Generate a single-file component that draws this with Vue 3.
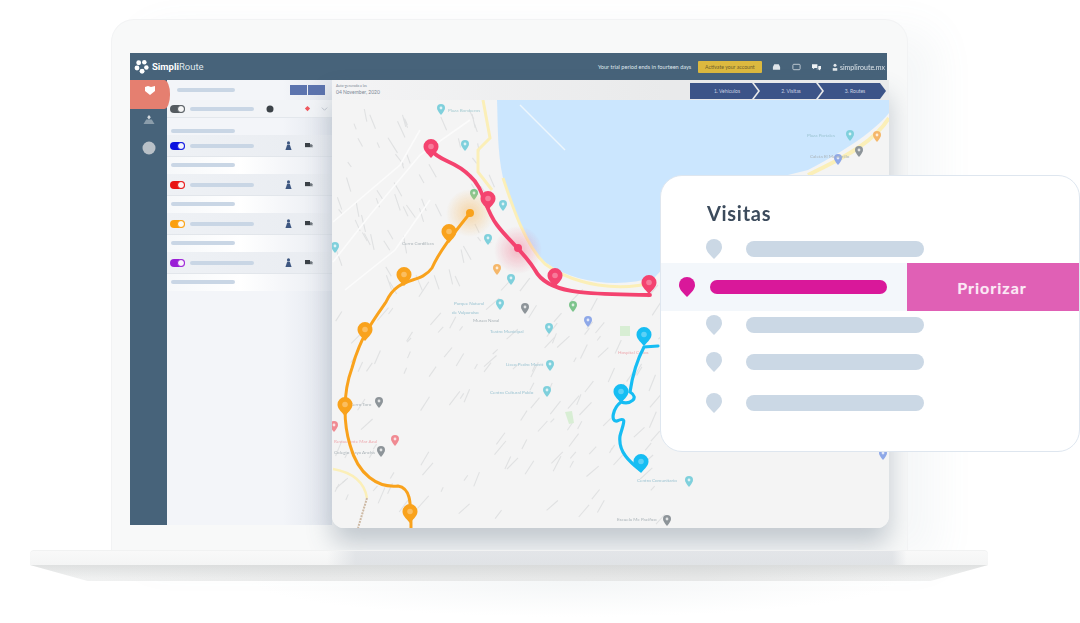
<template>
  <div class="stage">
    <div class="laptop">
      <div class="lid">
        <div class="screen">
          <header class="topbar">
            <div class="brand">
              <svg class="logo" viewBox="0 0 16 16">
                <g fill="#fff">
                  <circle cx="5" cy="4" r="2.6" />
                  <circle cx="11" cy="3.5" r="2.4" />
                  <circle cx="3.2" cy="9.6" r="2.6" />
                  <circle cx="8.6" cy="13" r="2.6" />
                  <circle cx="13.2" cy="9" r="2.4" />
                </g>
                <circle cx="8" cy="8" r="2" fill="#47637a" />
              </svg>
              <span class="brand-name"><b>Simpli</b>Route</span>
            </div>
            <span class="trial">Your trial period ends in fourteen days</span>
            <span class="upgrade">Activate your account</span>
            <svg class="bar-icon" viewBox="0 0 10 8"><path d="M1 7V4l1.5-3h5L9 4v3z" fill="#dfe5ea" /></svg>
            <svg class="bar-icon" viewBox="0 0 10 8"><rect x="1" y="1" width="8" height="6" rx="1" fill="none" stroke="#c8d2da" /></svg>
            <svg class="bar-icon" viewBox="0 0 10 8"><path d="M0 1h6v4H3L1 6.500V5H0zM7 3h3v3.500H9V8L7 6.500H5V6h2z" fill="#eef2f5" /></svg>
            <span class="account">
              <svg class="user-icon" viewBox="0 0 8 10"><circle cx="4" cy="2.500" r="2" fill="#e3e8ec" /><path d="M1 10V6.500h6V10z" fill="#e3e8ec" /></svg>
              simpliroute.mx
            </span>
          </header>

          <nav class="sidenav">
            <div class="nav-item active">
              <svg viewBox="0 0 12 10" class="nav-icon"><path d="M1 1.500 4 .5l3 1 4-1v5L6 9.500 1 5.500z" fill="#fff" /></svg>
            </div>
            <div class="nav-item">
              <svg viewBox="0 0 12 12" class="nav-icon"><path d="M6 1 8 3.500 6 6 4 3.500z" fill="#d4dadf" /><path d="M0 11 3 6h6l3 5z" fill="#8b9dab" /></svg>
            </div>
            <div class="nav-item">
              <svg viewBox="0 0 14 14" class="nav-icon gear"><circle cx="7" cy="7" r="6.500" fill="#b9c1c8" /></svg>
            </div>
          </nav>

          <aside class="panel">
            <div class="panel-head">
              <span class="bar w58"></span>
              <div class="head-btns"><span></span><span></span></div>
            </div>
            <div class="fleet">
              <span class="toggle" style="--c: #555b60"></span>
              <span class="bar w64"></span>
              <svg class="fleet-icon" viewBox="0 0 8 8"><circle cx="4" cy="4" r="3.500" fill="#3c4248" /></svg>
              <svg class="flag" viewBox="0 0 8 8"><path d="M1 4l3-3 3 3-3 3z" fill="#f0595f" /></svg>
              <svg class="chev" viewBox="0 0 8 8"><path d="M1 3l3 3 3-3" fill="none" stroke="#bcc4cc" /></svg>
            </div>
            <div class="group-label"><span class="bar w64"></span></div>
            <template v-for="d in drivers" :key="d">
              <div class="driver">
                <span class="toggle" :style="{ '--c': d }"></span>
                <span class="bar w64"></span>
                <svg class="person" viewBox="0 0 8 10"><circle cx="4" cy="2" r="1.800" fill="#3d5680" /><path d="M.5 10 2.500 4h3l2 6z" fill="#3d5680" /></svg>
                <svg class="truck" viewBox="0 0 12 8"><path d="M0 1h6v5H0z" fill="#3c4248" /><path d="M6 2.500h2l1.500 1.500v2H6z" fill="#70777e" /><circle cx="9" cy="5" r=".8" fill="#b4bac0" /></svg>
              </div>
              <div class="driver-sub"><span class="bar w64"></span></div>
            </template>
          </aside>

          <main class="workspace">
            <div class="map-head">
              <div class="map-date">
                <small>Auto-generado a las</small>
                <span>04 November, 2020</span>
              </div>
              <div class="steps">
                <span v-for="s in steps" :key="s" class="step">{{ s }}</span>
              </div>
            </div>
            <svg class="map" viewBox="332 100 557 428" preserveAspectRatio="none">
              <defs>
                <radialGradient id="glowOrange"><stop offset="0" stop-color="#f6c57e" stop-opacity=".65" /><stop offset="1" stop-color="#f6c57e" stop-opacity="0" /></radialGradient>
                <radialGradient id="glowPink"><stop offset="0" stop-color="#f2708a" stop-opacity=".45" /><stop offset="1" stop-color="#f2708a" stop-opacity="0" /></radialGradient>
                <filter id="soft"><feGaussianBlur stdDeviation=".5" /></filter>
              </defs>
              <rect x="332" y="100" width="557" height="428" fill="#f4f4f4" />
              <path d="M497 100 L889 100 L889 113 C875 130 850 148 808 170 L760 182 L690 240 L655 277 C620 288 575 284 545 262 C525 245 512 205 503 178 C497 150 498 125 497 100Z" fill="#cbe6fe" />
              <g filter="url(#soft)">
                <path d="M520 105 L565 150" stroke="#eef6fc" stroke-width="1.500" />
                <path v-for="(h, i) in hairlines" :key="i" :d="h" stroke="#e0e1e2" stroke-width="1.100" fill="none" />
                <path d="M333 222 L400 165 L420 130 M333 262 L370 215 L420 155 L470 120 M345 290 L395 250 L430 200" stroke="#fbfbfb" stroke-width="1.600" fill="none" />
                <path d="M483 100 L490 138 L478 150 L478 172 L492 190 M503 178 C512 205 525 245 545 264 C575 286 620 292 655 282" stroke="#fbefb8" stroke-width="3" fill="none" />
                <path d="M889 118 C875 140 850 155 808 175" stroke="#fbefb8" stroke-width="4" fill="none" />
                <path d="M333 469 C350 472 364 480 367 498" stroke="#fbefb8" stroke-width="2.500" fill="none" />
                <path d="M367 498 L358 528" stroke="#cdb9a4" stroke-width="2" stroke-dasharray="2 1" fill="none" />
                <rect x="620" y="326" width="10" height="10" fill="#d8eed4" />
                <path d="M565 412 L572 411 L574 423 L569 424Z" fill="#d8eed4" />
                <g v-for="p in pois" :key="p.x + '-' + p.y" :transform="`translate(${p.x} ${p.y})`">
                  <path d="M0 5C-2.500 2-4-.2-4-2a4 4 0 0 1 8 0C4-.2 2.500 2 0 5Z" :fill="p.c" />
                  <circle cy="-2" r="1.400" fill="#fff" fill-opacity=".75" />
                </g>
                <text v-for="l in labels" :key="l.t" :x="l.x" :y="l.y" :fill="l.c" class="map-label">{{ l.t }}</text>
              </g>
              <circle cx="470" cy="213" r="24" fill="url(#glowOrange)" />
              <circle cx="518" cy="250" r="24" fill="url(#glowPink)" />
              <path d="M431 150 C440 162 455 160 470 176 C484 188 484 208 497 225 C508 240 524 252 535 270 C548 295 590 294 650 295" stroke="#f4436f" stroke-width="3.800" fill="none" stroke-linecap="round" />
              <path d="M470 213 C455 232 440 250 432 268 C420 285 398 275 386 302 C372 322 360 338 352 368 C342 395 344 425 350 445 C358 475 378 488 398 486 C410 488 411 500 411 528" stroke="#f9a21c" stroke-width="3" fill="none" stroke-linecap="round" />
              <path d="M658 346 L644 347 C636 362 632 378 630 392 C640 398 630 405 621 402 C613 408 610 422 617 421 C628 416 623 424 620 436 C618 452 630 462 640 470" stroke="#16bdf3" stroke-width="3.200" fill="none" stroke-linecap="round" />
              <g v-for="m in markers" :key="m.x + '-' + m.y" :transform="`translate(${m.x} ${m.y})`">
                <path d="M0 9C-4.500 4-7.500 1.200-7.500-2.500a7.500 7.500 0 0 1 15 0C7.500 1.200 4.500 4 0 9Z" :fill="m.c" />
                <circle cy="-2.500" r="2.800" fill="#fff" fill-opacity=".3" />
              </g>
              <circle cx="470" cy="213" r="4" fill="#f9a21c" />
              <circle cx="518" cy="248" r="4" fill="#f4436f" />
            </svg>
          </main>
        </div>
      </div>
      <div class="base">
        <div class="base-top"></div>
        <div class="base-bottom"></div>
      </div>
    </div>

    <section class="visits">
      <h2>Visitas</h2>
      <ul>
        <li v-for="v in 5" :key="v" class="visit" :class="{ priority: v === 2 }">
          <svg class="visit-pin" viewBox="0 0 16 20"><path d="M8 20C3 15 0 12 0 8a8 8 0 0 1 16 0c0 4-3 7-8 12Z" /></svg>
          <span class="visit-bar"></span>
          <span v-if="v === 2" class="prioritize">Priorizar</span>
        </li>
      </ul>
    </section>
  </div>
</template>

<script setup>
const drivers = ["#0b12e0", "#e81414", "#fb9f0d", "#9a1fd6"];
const steps = ["1. Vehículos", "2. Visitas", "3. Routes"];

const markers = [
  { x: 431, y: 149, c: "#f4436f" },
  { x: 488, y: 201, c: "#f4436f" },
  { x: 555, y: 278, c: "#f4436f" },
  { x: 649, y: 285, c: "#f4436f" },
  { x: 449, y: 234, c: "#f9a21c" },
  { x: 404, y: 277, c: "#f9a21c" },
  { x: 365, y: 332, c: "#f9a21c" },
  { x: 345, y: 407, c: "#f9a21c" },
  { x: 410, y: 514, c: "#f9a21c" },
  { x: 644, y: 337, c: "#16bdf3" },
  { x: 621, y: 394, c: "#16bdf3" },
  { x: 641, y: 464, c: "#16bdf3" },
];

const pois = [
  { x: 441, y: 110, c: "#7fd0dc" },
  { x: 465, y: 146, c: "#7fd0dc" },
  { x: 474, y: 195, c: "#7cc48c" },
  { x: 503, y: 206, c: "#7fd0dc" },
  { x: 488, y: 240, c: "#7fd0dc" },
  { x: 497, y: 270, c: "#f5b76a" },
  { x: 511, y: 280, c: "#7fd0dc" },
  { x: 335, y: 248, c: "#7fd0dc" },
  { x: 500, y: 305, c: "#7fd0dc" },
  { x: 525, y: 309, c: "#8d9499" },
  { x: 573, y: 307, c: "#7cc48c" },
  { x: 588, y: 322, c: "#8ea8e8" },
  { x: 549, y: 329, c: "#7fd0dc" },
  { x: 550, y: 366, c: "#7fd0dc" },
  { x: 547, y: 392, c: "#7fd0dc" },
  { x: 379, y: 403, c: "#8d9499" },
  { x: 395, y: 441, c: "#f08a92" },
  { x: 381, y: 452, c: "#8d9499" },
  { x: 334, y: 427, c: "#f08a92" },
  { x: 689, y: 482, c: "#7fd0dc" },
  { x: 667, y: 521, c: "#8d9499" },
  { x: 883, y: 455, c: "#8ea8e8" },
  { x: 850, y: 136, c: "#7fd0dc" },
  { x: 877, y: 137, c: "#f5b76a" },
  { x: 859, y: 152, c: "#8d9499" },
  { x: 838, y: 160, c: "#8ea8e8" },
];

const labels = [
  { x: 448, y: 112, t: "Plaza Bomberos", c: "#a6ccd2" },
  { x: 402, y: 245, t: "Cerro Cordillera", c: "#aab3b8" },
  { x: 454, y: 305, t: "Parque Natural", c: "#9cc4d2" },
  { x: 452, y: 314, t: "de Valparaíso", c: "#9cc4d2" },
  { x: 473, y: 322, t: "Museo Naval", c: "#aab3b8" },
  { x: 490, y: 333, t: "Teatro Municipal", c: "#9cc4d2" },
  { x: 506, y: 366, t: "Liceo Pedro Montt", c: "#9cc4d2" },
  { x: 490, y: 394, t: "Centro Cultural Pablo", c: "#9cc4d2" },
  { x: 334, y: 443, t: "Restaurante Mar Azul", c: "#eeaab0" },
  { x: 334, y: 454, t: "Colegio Playa Ancha", c: "#aab3b8" },
  { x: 350, y: 406, t: "Cerro Toro", c: "#aab3b8" },
  { x: 618, y: 354, t: "Hospital Carlos", c: "#eeaab0" },
  { x: 637, y: 482, t: "Centro Comunitario", c: "#9cc4d2" },
  { x: 617, y: 521, t: "Escuela Mc Pacífico", c: "#aab3b8" },
  { x: 807, y: 137, t: "Plaza Portales", c: "#9cc4d2" },
  { x: 810, y: 158, t: "Caleta El Membrillo", c: "#aab3b8" },
];

// scattered streets, same seed every time so the picture stays stable
let seed = 7;
const rnd = () => {
  seed = (seed * 16807) % 2147483647;
  return seed / 2147483647;
};
const hairlines = [];
while (hairlines.length < 190) {
  const x = 335 + rnd() * 345;
  const y = 105 + rnd() * 420;
  if (x > 490 && y < 290) continue;
  const len = 5 + rnd() * 13;
  const angle = (y < 290 ? 0.9 + rnd() * 0.5 : -1.2 + rnd() * 0.5);
  hairlines.push(`M${x.toFixed(1)} ${y.toFixed(1)} l${(Math.cos(angle) * len).toFixed(1)} ${(Math.sin(angle) * len).toFixed(1)}`);
}
</script>

<style>
html,
body {
  margin: 0;
  background: #fff;
  overflow: hidden;
}
</style>

<style scoped>
.stage {
  position: relative;
  width: 1080px;
  height: 623px;
  overflow: hidden;
  background: #fff;
  font-family: "Lato", "Liberation Sans", sans-serif;
}

.laptop {
  width: 958px;
  margin-left: 30px;
  padding-top: 20px;
  display: flex;
  flex-direction: column;
}

.lid {
  width: 795px;
  height: 530px;
  box-sizing: border-box;
  margin-left: 82px;
  padding: 33px 20px 25px 18px;
  background: #f8f9f9;
  border-radius: 22px 22px 0 0;
  box-shadow: 0 0 0 1px #f2f3f4, 30px 10px 40px rgba(120, 135, 150, 0.07);
  overflow: hidden;
}

.screen {
  height: 100%;
  display: grid;
  grid-template-columns: 37px 165px 1fr;
  grid-template-rows: 27px 1fr;
  filter: blur(0.5px);
}

.topbar {
  grid-column: 1 / -1;
  display: flex;
  align-items: center;
  padding: 0 2px 0 4px;
  background: #47637a;
  color: #dfe6eb;
}

.brand {
  display: flex;
  align-items: center;
  gap: 3px;
  margin-right: auto;
}

.logo {
  width: 15px;
  height: 15px;
}

.brand-name {
  font-size: 9.500px;
  color: #dfe6eb;
  font-family: "Roboto", sans-serif;
}

.brand-name b {
  font-weight: 700;
  color: #fff;
}

.trial {
  font-size: 5.600px;
  width: 100px;
  white-space: nowrap;
}

.upgrade {
  width: 64px;
  height: 12px;
  line-height: 12px;
  text-align: center;
  background: #dcb93f;
  color: #6d5e2c;
  font-size: 5.200px;
  white-space: nowrap;
  border-radius: 1px;
  margin-right: 10px;
}

.bar-icon {
  width: 9px;
  height: 8px;
  margin-right: 11px;
}

.bar-icon:nth-of-type(4) {
  margin-right: 12px;
}

.account {
  display: flex;
  align-items: center;
  gap: 2px;
  font-size: 7px;
  white-space: nowrap;
}

.user-icon {
  width: 6px;
  height: 8px;
}

.sidenav {
  background: #47637a;
  display: flex;
  flex-direction: column;
  align-items: center;
}

.nav-item {
  height: 20px;
  width: 100%;
  display: flex;
  justify-content: center;
  align-items: center;
}

.nav-item:last-child {
  margin-top: 9px;
}

.nav-item.active {
  width: 40px;
  background: #e57f70;
  border-radius: 0 6px 6px 0 / 0 14px 14px 0;
  position: relative;
  z-index: 1;
  align-self: flex-start;
  align-items: flex-start;
  padding-top: 5px;
  height: 24px;
}

.nav-icon {
  width: 12px;
  height: 11px;
}

.nav-icon.gear {
  width: 14px;
  height: 14px;
}

.panel {
  display: flex;
  flex-direction: column;
  background: linear-gradient(90deg, #f3f5f9 0%, #f3f5f9 70%, #e3e7ee 100%);
}

.bar {
  display: block;
  height: 4px;
  border-radius: 2px;
  background: #c9d6e5;
}

.w58 {
  width: 58px;
}

.w64 {
  width: 64px;
}

.panel-head {
  height: 20px;
  flex: none;
  display: flex;
  align-items: center;
  justify-content: space-between;
  padding: 0 7px 0 10px;
}

.head-btns {
  display: flex;
  gap: 1px;
}

.head-btns span {
  width: 17px;
  height: 10px;
  background: #5b73ae;
}

.fleet,
.driver {
  flex: none;
  display: flex;
  align-items: center;
  padding-left: 3px;
}

.fleet {
  height: 18px;
  border-bottom: 1px solid #e3e7ec;
  box-sizing: border-box;
  background: #f2f4f7;
}

.driver {
  height: 22px;
  background: linear-gradient(90deg, #eef1f5, #e9ecf1);
  border-bottom: 1px solid #e2e6eb;
  box-sizing: border-box;
}

.driver-sub {
  height: 17px;
  flex: none;
  display: flex;
  align-items: center;
  padding-left: 4px;
  background: linear-gradient(90deg, #f6f8fa, #fff 45%, #e9ecf2);
}

.driver-sub .bar {
  margin-top: -1px;
}

.group-label {
  height: 17px;
  flex: none;
  display: flex;
  align-items: flex-end;
  padding-left: 4px;
  padding-bottom: 2px;
  box-sizing: border-box;
}

.toggle {
  position: relative;
  flex: none;
  width: 15px;
  height: 8px;
  margin-right: 5px;
  border-radius: 4px;
  background: var(--c);
}

.toggle::after {
  content: "";
  position: absolute;
  right: 0;
  top: 0;
  width: 6px;
  height: 6px;
  border: 1px solid var(--c);
  border-radius: 50%;
  background: #fff;
  opacity: 0.95;
}

.fleet-icon {
  width: 8px;
  height: 8px;
  margin-left: 12px;
}

.flag {
  width: 7px;
  height: 7px;
  margin-left: 30px;
}

.chev {
  width: 7px;
  height: 7px;
  margin-left: 10px;
}

.person {
  width: 7px;
  height: 9px;
  margin-left: 31px;
}

.truck {
  width: 10px;
  height: 7px;
  margin-left: 13px;
}

.workspace {
  display: flex;
  flex-direction: column;
  min-width: 0;
  margin: 0 -2px -3px 0;
  border-radius: 0 0 12px 12px;
  box-shadow: 0 16px 26px rgba(70, 90, 110, 0.3);
  position: relative;
}

.map-head {
  height: 20px;
  flex: none;
  display: flex;
  justify-content: space-between;
  background: linear-gradient(90deg, #f4f4f5, #e9eaeb 60%);
}

.map-date {
  display: flex;
  flex-direction: column;
  justify-content: center;
  padding-left: 4px;
  color: #7c8895;
  font-size: 5px;
  line-height: 7px;
}

.map-date small {
  font-size: 3.500px;
  line-height: 5px;
}

.steps {
  display: flex;
  height: 16px;
  margin: 3px 3px 0 0;
}

.step {
  width: 68px;
  margin-left: -4px;
  box-sizing: border-box;
  padding-left: 6px;
  line-height: 16px;
  text-align: center;
  font-size: 5px;
  color: #c8d1e2;
  white-space: nowrap;
  background: #3c5488;
  clip-path: polygon(0 0, calc(100% - 6px) 0, 100% 50%, calc(100% - 6px) 100%, 0 100%, 6px 50%);
}

.step:first-child {
  margin-left: 0;
  clip-path: polygon(0 0, calc(100% - 6px) 0, 100% 50%, calc(100% - 6px) 100%, 0 100%);
}

.map {
  display: block;
  width: 100%;
  flex: 1;
  min-height: 0;
  border-radius: 0 0 12px 12px;
  overflow: hidden;
}

.map-label {
  font-size: 4.600px;
  font-family: "Lato", sans-serif;
}

.base {
  width: 100%;
  position: relative;
}

.base-top {
  height: 15px;
  background:
    linear-gradient(90deg, transparent 31%, rgba(200, 205, 212, 0.45) 34%, rgba(200, 205, 212, 0.45) 90%, transparent 91.500%),
    linear-gradient(#f9f9f9, #f4f5f5);
  border-radius: 4px 4px 0 0;
  box-shadow: inset 0 1px 0 #f1f2f2;
}

.base-bottom {
  height: 16px;
  background:
    linear-gradient(rgba(200, 203, 203, 0.45), rgba(246, 247, 247, 0) 85%),
    linear-gradient(90deg, #f2f3f3, #e9eaea 30%, #e6e7e7 70%, #f2f3f3);
  clip-path: polygon(0 0, 100% 0, 94% 100%, 6% 100%);
}

.base::after {
  content: "";
  position: absolute;
  left: 220px;
  right: 90px;
  top: 31px;
  height: 36px;
  background: radial-gradient(ellipse 50% 100% at 50% 0, #f4f6f7, rgba(255, 255, 255, 0));
}

.visits {
  position: absolute;
  left: 660px;
  top: 175px;
  width: 420px;
  height: 277px;
  box-sizing: border-box;
  padding-top: 24px;
  background: #fff;
  border: 1.500px solid #dee6ef;
  border-radius: 22px;
  overflow: hidden;
}

.visits h2 {
  margin: 0 0 9px 46px;
  height: 26px;
  font-size: 20px;
  line-height: 26px;
  font-weight: 700;
  letter-spacing: 0.7px;
  color: #3c4b5c;
  filter: blur(0.4px);
}

.visits ul {
  margin: 0;
  padding: 0;
  list-style: none;
}

.visit {
  height: 28px;
  display: flex;
  align-items: center;
  padding-left: 45px;
}

.visit:nth-child(4) {
  margin-top: 9px;
}

.visit:nth-child(5) {
  margin-top: 13px;
}

.visit-pin {
  width: 16px;
  height: 20px;
  margin-right: 24px;
  fill: #cbd8e5;
}

.visit-bar {
  width: 178px;
  height: 16px;
  border-radius: 8px;
  background: #cbd8e5;
}

.visit.priority {
  height: 48px;
  padding-left: 18px;
  background: #f3f7fb;
}

.priority .visit-pin {
  margin-right: 15px;
  fill: #d9189a;
}

.priority .visit-bar {
  height: 14px;
  width: 177px;
  background: #d9189a;
}

.prioritize {
  align-self: stretch;
  margin-left: 20px;
  padding-right: 2px;
  flex: 1;
  display: flex;
  align-items: center;
  justify-content: center;
  background: #e060b5;
  color: #fbe9f5;
  font-size: 16px;
  font-weight: 700;
  letter-spacing: 1px;
  text-shadow: 0 0 1px rgba(255, 255, 255, 0.4);
}
</style>
